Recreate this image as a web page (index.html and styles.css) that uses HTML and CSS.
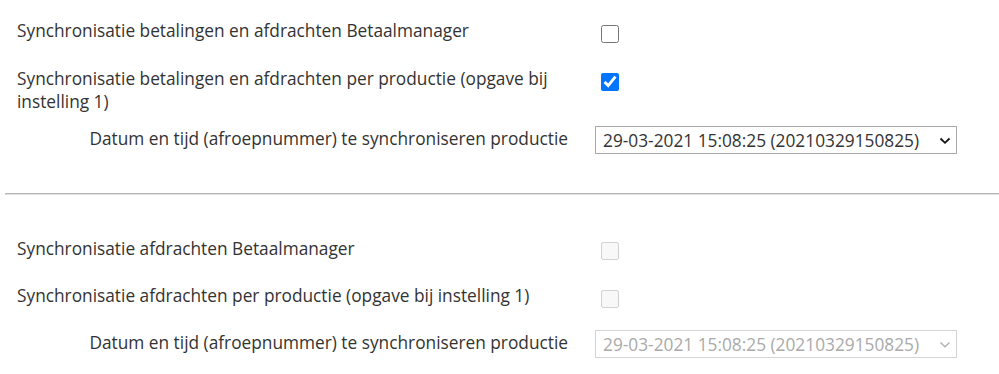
FILE: index.html
```html
<!DOCTYPE html>
<html lang="nl">
<head>
    <meta charset="UTF-8">
    <meta name="viewport" content="width=device-width, initial-scale=1.0">
    <title>Synchronisatie</title>
    <link rel="stylesheet" href="styles.css">
</head>
<body>
    <div class="section first">
        <div class="row r1">
            <div class="label">Synchronisatie betalingen en afdrachten Betaalmanager</div>
            <div class="control"><input type="checkbox" class="check"></div>
        </div>
        <div class="row r2">
            <div class="label">Synchronisatie betalingen en afdrachten per productie (opgave bij instelling 1)</div>
            <div class="control"><input type="checkbox" class="check" checked></div>
        </div>
        <div class="row r3">
            <div class="label sub">Datum en tijd (afroepnummer) te synchroniseren productie</div>
            <div class="control">
                <div class="select-wrap">
                    <select class="select">
                        <option>29-03-2021 15:08:25 (20210329150825)</option>
                    </select>
                    <!-- pijltje -->
                    <svg class="arrow" width="12" height="8" viewBox="0 0 12 8"><path d="M1.5 1.5 L6 5.8 L10.5 1.5" fill="none" stroke="currentColor" stroke-width="1.8"/></svg>
                </div>
            </div>
        </div>
    </div>

    <hr class="divider">

    <div class="section second">
        <div class="row r4">
            <div class="label">Synchronisatie afdrachten Betaalmanager</div>
            <div class="control"><input type="checkbox" class="check" disabled></div>
        </div>
        <div class="row r5">
            <div class="label">Synchronisatie afdrachten per productie (opgave bij instelling 1)</div>
            <div class="control"><input type="checkbox" class="check" disabled></div>
        </div>
        <div class="row r6">
            <div class="label sub">Datum en tijd (afroepnummer) te synchroniseren productie</div>
            <div class="control">
                <div class="select-wrap disabled">
                    <select class="select" disabled>
                        <option>29-03-2021 15:08:25 (20210329150825)</option>
                    </select>
                    <svg class="arrow" width="12" height="8" viewBox="0 0 12 8"><path d="M1.5 1.5 L6 5.8 L10.5 1.5" fill="none" stroke="currentColor" stroke-width="1.3"/></svg>
                </div>
            </div>
        </div>
    </div>
</body>
</html>
```

FILE: styles.css
```css
body{
    margin: 0 0 0 5px;
    font-family: "Open Sans", "Noto Sans", sans-serif;
    font-size: 17.3px;
    line-height: 23px;
    color: #333;
    background: #fff;
}
.row{
    display: grid;
    grid-template-columns: 575px 1fr;
    align-items: start;
}
.label{
    padding: 0 12px;
}
.label.sub{
    text-align: right;
}
.control{
    padding-left: 15px;
}
.check{
    width: 18px;
    height: 18px;
    margin: 6px 0 0 6px;
    display: block;
}
/* rijen bovenste blok */
.first{
    padding-top: 19px;
}
.r2{
    margin-top: 24px;
}
.r3{
    margin-top: 13px;
}
.r3 .label,
.r6 .label{
    padding-top: 1px;
}
/* scheidingslijn */
.divider{
    margin: 39px 0 0 0;
    height: 0;
    border: none;
    border-top: 1px solid #b4b4b4;
    border-bottom: 1px solid #e2e2e2;
    border-left: 1px solid #c8c8c8;
}
/* rijen onderste blok */
.second{
    padding-top: 42px;
}
.r4 .check{
    margin-top: 5px;
}
.r5{
    margin-top: 24px;
}
.r6{
    margin-top: 22px;
}
.select-wrap{
    width: 362px;
    height: 28px;
    position: relative;
    color: #111;
}
.select{
    width: 100%;
    height: 28px;
    box-sizing: border-box;
    margin: 0;
    padding: 0 30px 0 7px;
    border: 1px solid #a9a9a9;
    border-radius: 0;
    background: #fff;
    font-family: "Open Sans", "Noto Sans", sans-serif;
    font-size: 17.3px;
    color: #333;
    -webkit-appearance: none;
    appearance: none;
}
.select-wrap .arrow{
    position: absolute;
    right: 6px;
    top: 11px;
    pointer-events: none;
}
.select-wrap.disabled{
    color: #b0b0b0;
}
.select-wrap.disabled .select{
    border-color: #d4d4d4;
    color: #aaa;
    opacity: 1;
}
```
